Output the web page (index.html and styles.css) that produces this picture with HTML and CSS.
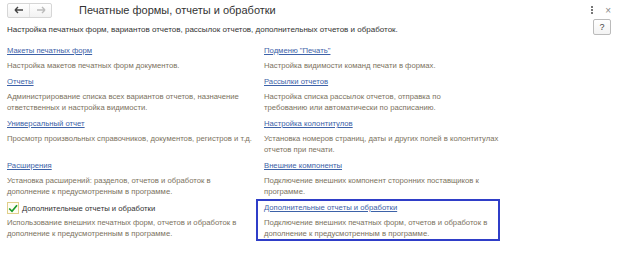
FILE: index.html
```html
<!DOCTYPE html>
<html lang="ru">
<head>
  <meta charset="UTF-8">
  <title>Печатные формы, отчеты и обработки</title>
  <link rel="stylesheet" href="styles.css">
</head>
<body>
  <div class="window">
    <div class="header">
      <div class="nav">
        <div class="nav-btn">
          <svg width="10" height="8" viewBox="0 0 10 8"><path d="M1 4h8M1 4l3-3M1 4l3 3" stroke="#444" stroke-width="1.4" fill="none"/></svg>
        </div>
        <div class="nav-btn">
          <svg width="10" height="8" viewBox="0 0 10 8"><path d="M9 4H1M9 4L6 1M9 4L6 7" stroke="#bbb" stroke-width="1.4" fill="none"/></svg>
        </div>
      </div>
      <h1 class="title">Печатные формы, отчеты и обработки</h1>
      <div class="win-tools">
        <span class="kebab"><i></i><i></i><i></i></span>
        <span class="close">×</span>
      </div>
    </div>

    <div class="subheader">
      <p class="subtitle">Настройка печатных форм, вариантов отчетов, рассылок отчетов, дополнительных отчетов и обработок.</p>
      <div class="help">?</div>
    </div>

    <div class="grid">
      <div class="item">
        <a class="link" href="#">Макеты печатных форм</a>
        <p class="desc">Настройка макетов печатных форм документов.</p>
      </div>
      <div class="item">
        <a class="link" href="#">Подменю "Печать"</a>
        <p class="desc">Настройка видимости команд печати в формах.</p>
      </div>

      <div class="item">
        <a class="link" href="#">Отчеты</a>
        <p class="desc">Администрирование списка всех вариантов отчетов, назначение<br>ответственных и настройка видимости.</p>
      </div>
      <div class="item">
        <a class="link" href="#">Рассылки отчетов</a>
        <p class="desc">Настройка списка рассылок отчетов, отправка по<br>требованию или автоматически по расписанию.</p>
      </div>

      <div class="item">
        <a class="link" href="#">Универсальный отчет</a>
        <p class="desc">Просмотр произвольных справочников, документов, регистров и т.д.</p>
      </div>
      <div class="item">
        <a class="link" href="#">Настройка колонтитулов</a>
        <p class="desc">Установка номеров страниц, даты и других полей в колонтитулах<br>отчетов при печати.</p>
      </div>

      <div class="item">
        <a class="link" href="#">Расширения</a>
        <p class="desc">Установка расширений: разделов, отчетов и обработок в<br>дополнение к предусмотренным в программе.</p>
      </div>
      <div class="item">
        <a class="link" href="#">Внешние компоненты</a>
        <p class="desc">Подключение внешних компонент сторонних поставщиков к<br>программе.</p>
      </div>

      <div class="item">
        <label class="check">
          <span class="box">
            <svg width="10" height="9" viewBox="0 0 10 9"><path d="M1.2 4.5l2.8 2.8L9 1.2" stroke="#1a9a2a" stroke-width="1.7" fill="none"/></svg>
          </span>
          Дополнительные отчеты и обработки
        </label>
        <p class="desc">Использование внешних печатных форм, отчетов и обработок в<br>дополнение к предусмотренным в программе.</p>
      </div>
      <div class="item selected">
        <a class="link" href="#">Дополнительные отчеты и обработки</a>
        <p class="desc">Подключение внешних печатных форм, отчетов и обработок в<br>дополнение к предусмотренным в программе.</p>
      </div>
    </div>
  </div>
</body>
</html>
```

FILE: styles.css
```css
body {
  margin: 0;
  font-family: "Liberation Sans", Arial, sans-serif;
  font-size: 7.7px;
  background-color: #fff;
  color: #333;
}
.window {
  width: 623px;
  height: 265px;
  overflow: hidden;
}
.header {
  display: flex;
  align-items: center;
  height: 18px;
  padding: 1px 0 0 7px;
}
.nav {
  display: flex;
  border: 1px solid #d6d6d6;
  border-radius: 2px;
  background: linear-gradient(#fff, #f2f2f2);
}
.nav-btn {
  width: 21px;
  height: 13px;
  display: flex;
  align-items: center;
  justify-content: center;
}
.nav-btn + .nav-btn {
  border-left: 1px solid #e2e2e2;
}
.title {
  margin: 0 0 0 27px;
  font-size: 11px;
  font-weight: normal;
  color: #333;
}
.win-tools {
  margin-left: auto;
  display: flex;
  align-items: center;
  gap: 12px;
  padding-right: 12px;
}
.kebab {
  display: flex;
  flex-direction: column;
  gap: 1px;
}
.kebab i {
  width: 2px;
  height: 2px;
  background-color: #777;
}
.close {
  font-size: 10px;
  color: #888;
}
.subheader {
  display: flex;
  align-items: center;
  height: 16px;
  padding: 0 12px 0 7px;
}
.subtitle {
  margin: 4px 0 0 0;
  font-size: 8px;
  color: #333;
}
.help {
  margin-left: auto;
  width: 16px;
  height: 14px;
  border: 1px solid #bbb;
  border-radius: 2px;
  text-align: center;
  line-height: 14px;
  font-size: 9px;
  color: #444;
  background: linear-gradient(#fff, #f3f3f3);
}
.grid {
  display: grid;
  grid-template-columns: 256px 250px;
  margin-top: 7px;
}
.item {
  padding: 1px 0 0 5px;
  border: 2px solid transparent;
  white-space: nowrap;
}
.item:nth-child(even) {
  padding-left: 6px;
}
.link {
  display: inline-block;
  color: #3d62a8;
  text-decoration: underline;
  line-height: 12px;
  margin-bottom: 3px;
}
.desc {
  margin: 0;
  line-height: 11px;
  color: #7b7260;
}
.check {
  display: flex;
  align-items: center;
  gap: 3px;
  height: 12px;
  margin-bottom: 3px;
  color: #333;
}
.box {
  width: 10px;
  height: 10px;
  border: 1px solid #e0cf8a;
  background-color: #fffdf3;
  display: flex;
  align-items: center;
  justify-content: center;
}
.selected {
  justify-self: start;
  width: 234px;
  border-color: #2f3ec8;
}
```
